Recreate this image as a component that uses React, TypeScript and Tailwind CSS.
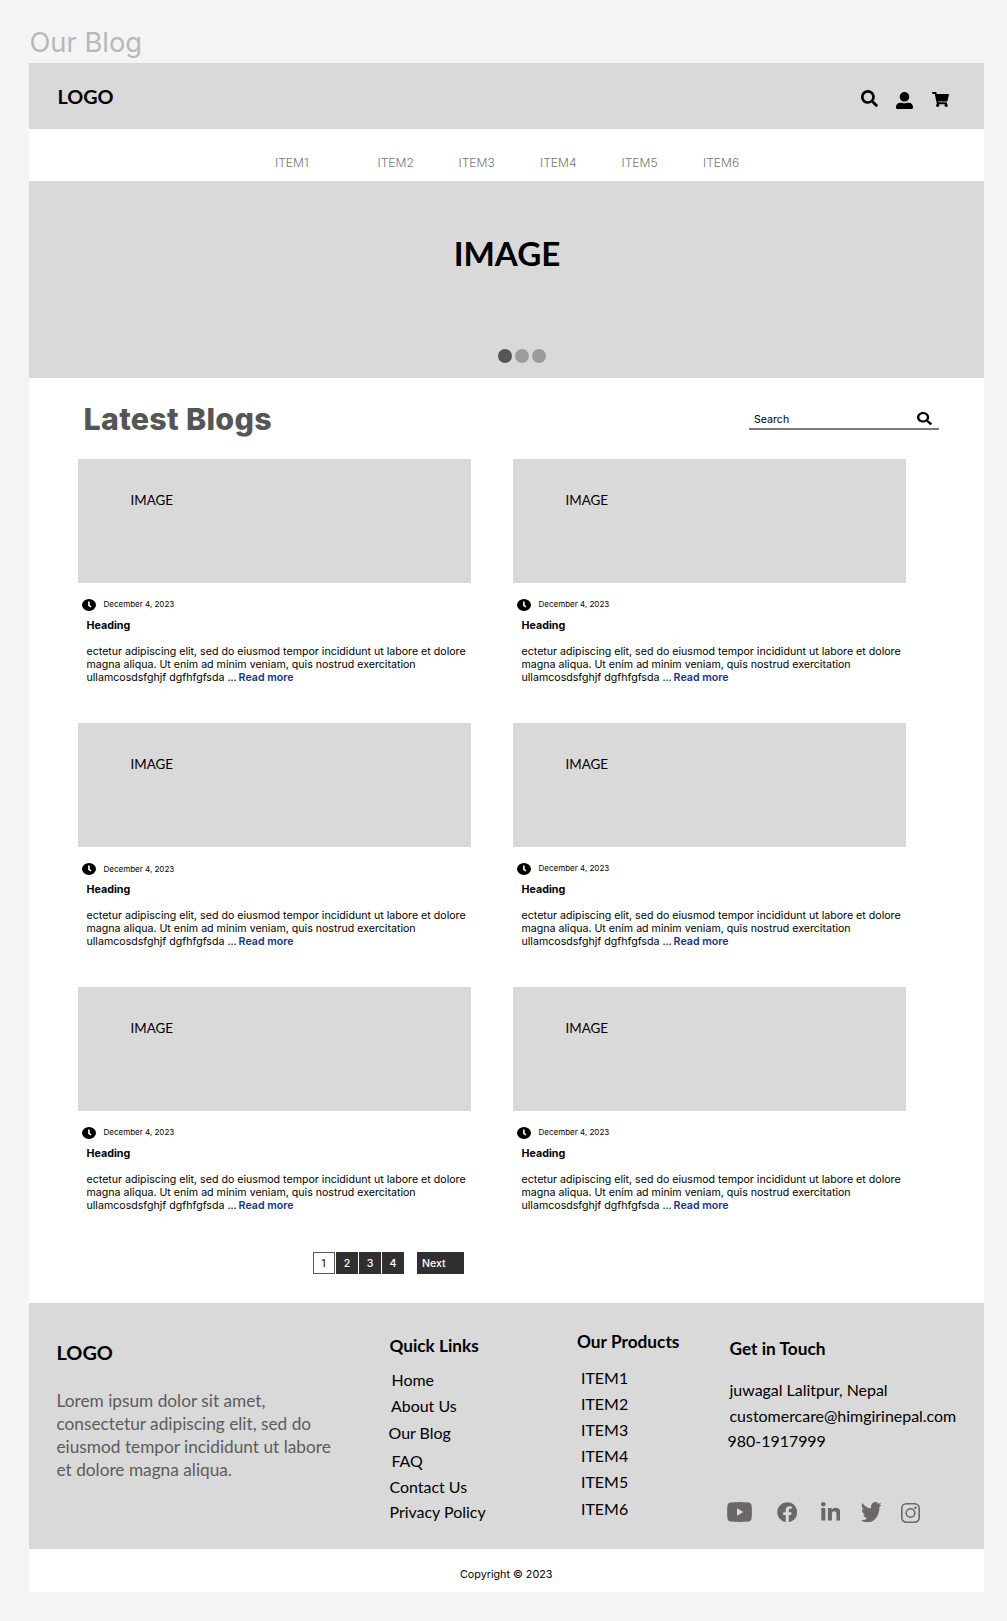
import React from "react";
import { FaSearch, FaUserAlt, FaShoppingCart, FaFacebook, FaLinkedinIn, FaTwitter } from "react-icons/fa";

const lato = "font-['Lato',sans-serif]";

const navItems = [
  { label: "ITEM1", cls: "w-[102.5px]" },
  { label: "ITEM2", cls: "w-[81px]" },
  { label: "ITEM3", cls: "w-[81.5px]" },
  { label: "ITEM4", cls: "w-[81.5px]" },
  { label: "ITEM5", cls: "w-[81.5px]" },
  { label: "ITEM6", cls: "w-[60px]" },
];

const cards = [
  { id: 1, date: "December 4, 2023", dateCls: "-mt-[2px]" },
  { id: 2, date: "December 4, 2023", dateCls: "-mt-[2px]" },
  { id: 3, date: "December 4, 2023", dateCls: "mt-0" },
  { id: 4, date: "December 4, 2023", dateCls: "-mt-[2px]" },
  { id: 5, date: "December 4, 2023", dateCls: "-mt-[2px]" },
  { id: 6, date: "December 4, 2023", dateCls: "-mt-[2px]" },
];

const quickLinks = [
  { label: "Home", cls: "ml-[2px]" },
  { label: "About Us", cls: "ml-[1.5px] mt-[2px]" },
  { label: "Our Blog", cls: "-ml-[1px] mt-[3px]" },
  { label: "FAQ", cls: "ml-[2px] mt-[4px]" },
  { label: "Contact Us", cls: "mt-[2px]" },
  { label: "Privacy Policy", cls: "mt-[1px]" },
];

const products = ["ITEM1", "ITEM2", "ITEM3", "ITEM4", "ITEM5", "ITEM6"];

function ClockIcon() {
  return (
    <svg viewBox="0 0 14 12" className="h-[12px] w-[14px]">
      <ellipse cx="7" cy="6" rx="7" ry="5.9" fill="#000" />
      <path d="M6.9 2.4V6.3L9 7.8" fill="none" stroke="#fff" strokeWidth="1.6" />
    </svg>
  );
}

function YoutubeIcon() {
  return (
    <svg viewBox="0 0 25 20" className="h-[20px] w-[25px]" fill="#6b6767">
      <path
        fillRule="evenodd"
        d="M3.6.5Q12.5-.3 21.4.5 24.3.8 24.6 4 25.2 10 24.6 16 24.3 19.2 21.4 19.5 12.5 20.3 3.6 19.5.7 19.2.4 16-.2 10 .4 4 .7.8 3.6.5ZM10 6.2V13.8L16.4 10Z"
      />
    </svg>
  );
}

function InstagramIcon() {
  return (
    <svg viewBox="0 0 19 20" className="h-[20px] w-[19px]" fill="none" stroke="#6b6767" strokeWidth="1.6">
      <rect x=".8" y=".8" width="17.4" height="18.4" rx="4.6" />
      <circle cx="9.5" cy="10" r="4.3" />
      <circle cx="14.4" cy="4.8" r="1.2" fill="#6b6767" stroke="none" />
    </svg>
  );
}

function BlogCard({ date, dateCls }: { date: string; dateCls: string }) {
  return (
    <article className="h-[264px] w-[393px]">
      <div className="h-[124px] bg-[#d9d9d9] pl-[52.5px] pt-[32px]">
        <span className={`${lato} block text-[13.4px] leading-[18px]`}>IMAGE</span>
      </div>
      <div className="mt-[15px] flex h-[14px] items-center pl-[4px]">
        <ClockIcon />
        <span className={`ml-[7.5px] text-[8px] leading-[12px] ${dateCls}`}>{date}</span>
      </div>
      <h3 className="mt-[6px] pl-[8.5px] text-[10.7px] font-bold leading-[16px]">Heading</h3>
      <p className="mt-[12.4px] whitespace-nowrap pl-[8.5px] text-[10.64px] leading-[12.6px]">
        ectetur adipiscing elit, sed do eiusmod tempor incididunt ut labore et dolore
        <br />
        magna aliqua. Ut enim ad minim veniam, quis nostrud exercitation
        <br />
        ullamcosdsfghjf dgfhfgfsda ... <a className="-ml-[1px] font-semibold text-[#0f3782]">Read more</a>
      </p>
    </article>
  );
}

export default function App() {
  return (
    <div className="h-[1621px] w-[1007px] overflow-hidden bg-[#f4f4f4] pl-[29px] pt-[27px] font-['Inter',sans-serif] text-black">
      <div className="h-[36px] pl-[0.5px] pt-[1px] text-[27.3px] leading-[30px] text-[#b8b8b8]">Our Blog</div>

      <div className="h-[1529px] w-[955px] bg-white">
        <header className="flex h-[66px] justify-between bg-[#d9d9d9] pl-[28.5px] pr-[35px]">
          <span className={`${lato} mt-[22px] text-[19.8px] font-bold leading-[23px]`}>LOGO</span>
          <div className="flex pt-[27px]">
            <FaSearch className="h-[17px] w-[17px]" />
            <FaUserAlt className="ml-[18.5px] mt-[2px] h-[17px] w-[17px]" />
            <FaShoppingCart className="ml-[19px] mt-[2px] h-[15px] w-[17px]" />
          </div>
        </header>

        <nav className="flex h-[52px] pl-[246px] pt-[26px] text-[12.1px] font-light leading-[16px] text-[#777]">
          {navItems.map((item) => (
            <a key={item.label} className={item.cls}>{item.label}</a>
          ))}
        </nav>

        <section className="flex h-[197px] flex-col bg-[#d9d9d9]">
          <div className={`${lato} mt-[52px] text-center text-[33.2px] font-bold leading-[40px] pl-[1px]`}>IMAGE</div>
          <div className="mt-[76px] flex gap-[3.7px] pl-[469px]">
            <span className="h-[13.5px] w-[13.5px] rounded-full bg-[#575656]" />
            <span className="h-[13.5px] w-[13.5px] rounded-full bg-[#9e9b9c]" />
            <span className="h-[13.5px] w-[13.5px] rounded-full bg-[#9e9b9c]" />
          </div>
        </section>

        <main className="h-[925px] pl-[49px]">
          <div className="flex h-[81px] justify-between pl-[5.5px] pr-[45px]">
            <h1 className="mt-[21px] text-[30.4px] font-extrabold leading-[40px] tracking-[0.3px] text-[#555]">Latest Blogs</h1>
            <div className="mt-[32px] flex h-[20px] w-[190px] justify-between border-b-2 border-[#7c7c7c] pl-[5px] pr-[7px]">
              <span className="text-[10.6px] leading-[19px]">Search</span>
              <FaSearch className="mt-[2px] h-[13px] w-[15px]" preserveAspectRatio="none" />
            </div>
          </div>
          <div className="grid w-[828px] grid-cols-2 gap-x-[42px]">
            {cards.map((card) => (
              <BlogCard key={card.id} date={card.date} dateCls={card.dateCls} />
            ))}
          </div>
          <div className="mt-[1px] flex gap-[1px] pl-[235px] text-[10.6px] font-medium leading-[23px] text-white">
            <span className="h-[22px] w-[22px] border border-[#555] pr-[1px] text-center leading-[21px] text-[#333]">1</span>
            <span className="h-[22px] w-[22px] bg-[#322f30] text-center">2</span>
            <span className="h-[22px] w-[22px] bg-[#322f30] text-center">3</span>
            <span className="h-[22px] w-[22px] bg-[#322f30] text-center">4</span>
            <span className="ml-[12px] h-[22px] w-[47px] bg-[#322f30] pl-[5px]">Next</span>
          </div>
        </main>

        <footer className={`${lato} flex h-[246px] bg-[#d9d9d9] pl-[27.5px] text-[15.94px]`}>
          <div className="w-[333px] pt-[37px]">
            <div className="text-[19.9px] font-bold leading-[24px]">LOGO</div>
            <p className="mt-[24.6px] whitespace-nowrap text-[17.25px] leading-[23.3px] text-[#5c5c5c]">
              Lorem ipsum dolor sit amet,
              <br />
              consectetur adipiscing elit, sed do
              <br />
              eiusmod tempor incididunt ut labore
              <br />
              et dolore magna aliqua.
            </p>
          </div>
          <div className="w-[187.5px] pt-[31px]">
            <h4 className="mb-[10px] text-[17.2px] font-bold leading-[24px]">Quick Links</h4>
            {quickLinks.map((link) => (
              <div key={link.label} className={`leading-[24px] ${link.cls}`}>{link.label}</div>
            ))}
          </div>
          <div className="w-[152.5px] pt-[27px]">
            <h4 className="mb-[10.5px] text-[17.3px] font-bold leading-[24px]">Our Products</h4>
            {products.map((name) => (
              <div key={name} className="pl-[4px] leading-[26.2px]">{name}</div>
            ))}
          </div>
          <div className="whitespace-nowrap pt-[34px]">
            <h4 className="mb-[16px] text-[17.3px] font-bold leading-[24px]">Get in Touch</h4>
            <div className="leading-[25.7px]">juwagal Lalitpur, Nepal</div>
            <div className="leading-[25.7px]">customercare@himgirinepal.com</div>
            <div className="-ml-[2px] leading-[26.7px]">980-1917999</div>
            <div className="-ml-[2.5px] mt-[46.5px] flex text-[#6b6767]">
              <YoutubeIcon />
              <FaFacebook className="ml-[24.5px] h-[20.5px] w-[20.5px]" />
              <FaLinkedinIn className="ml-[23.5px] h-[21px] w-[19.5px]" preserveAspectRatio="none" />
              <FaTwitter className="ml-[20.5px] h-[20.5px] w-[20.5px]" preserveAspectRatio="none" viewBox="0 48 512 416" />
              <div className="ml-[20px] mt-[1px]">
                <InstagramIcon />
              </div>
            </div>
          </div>
        </footer>

        <div className="pl-[431px] pt-[18px] text-[10.75px] leading-[16px]">Copyright © 2023</div>
      </div>
    </div>
  );
}
